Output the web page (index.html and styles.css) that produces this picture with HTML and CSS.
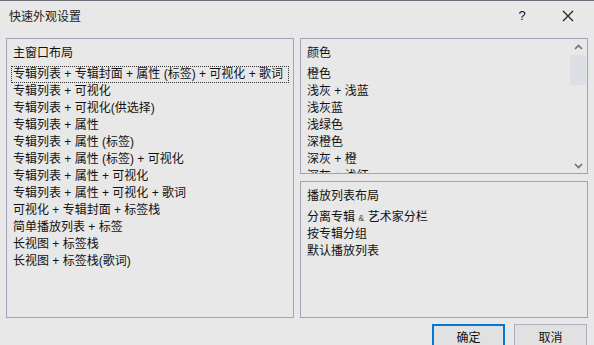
FILE: index.html
```html
<!DOCTYPE html>
<html lang="zh-CN">
<head>
  <meta charset="UTF-8">
  <title>快速外观设置</title>
  <link rel="stylesheet" href="styles.css">
</head>
<body>
  <div class="dialog">
    <div class="titlebar">
      <span class="title">快速外观设置</span>
      <span class="tb-btn help">?</span>
      <span class="tb-btn close">
        <svg width="12" height="12" viewBox="0 0 12 12"><path d="M1 1 L11 11 M11 1 L1 11" stroke="#1a1a1a" stroke-width="1.1" fill="none"/></svg>
      </span>
    </div>
    <div class="content">
      <div class="panel main-layout">
        <div class="heading">主窗口布局</div>
        <ul class="list">
          <li class="focused">专辑列表 + 专辑封面 + 属性 (标签) + 可视化 + 歌词</li>
          <li>专辑列表 + 可视化</li>
          <li>专辑列表 + 可视化(供选择)</li>
          <li>专辑列表 + 属性</li>
          <li>专辑列表 + 属性 (标签)</li>
          <li>专辑列表 + 属性 (标签) + 可视化</li>
          <li>专辑列表 + 属性 + 可视化</li>
          <li>专辑列表 + 属性 + 可视化 + 歌词</li>
          <li>可视化 + 专辑封面 + 标签栈</li>
          <li>简单播放列表 + 标签</li>
          <li>长视图 + 标签栈</li>
          <li>长视图 + 标签栈(歌词)</li>
        </ul>
      </div>
      <div class="side">
        <div class="panel colors">
          <div class="colors-body">
            <div class="heading">颜色</div>
            <ul class="list">
              <li>橙色</li>
              <li>浅灰 + 浅蓝</li>
              <li>浅灰蓝</li>
              <li>浅绿色</li>
              <li>深橙色</li>
              <li>深灰 + 橙</li>
              <li>深灰 + 浅红</li>
            </ul>
          </div>
          <div class="scrollbar">
            <svg class="arrow" width="9" height="6" viewBox="0 0 9 6"><path d="M1 5 L4.5 1.5 L8 5" stroke="#6e6e78" stroke-width="1.6" fill="none"/></svg>
            <div class="track"><div class="thumb"></div></div>
            <svg class="arrow" width="9" height="6" viewBox="0 0 9 6"><path d="M1 1 L4.5 4.5 L8 1" stroke="#6e6e78" stroke-width="1.6" fill="none"/></svg>
          </div>
        </div>
        <div class="panel playlist">
          <div class="heading">播放列表布局</div>
          <ul class="list">
            <li>分离专辑 <span class="amp">&amp;</span> 艺术家分栏</li>
            <li>按专辑分组</li>
            <li>默认播放列表</li>
          </ul>
        </div>
      </div>
    </div>
    <div class="buttons">
      <button class="btn primary">确定</button>
      <button class="btn">取消</button>
    </div>
  </div>
</body>
</html>
```

FILE: styles.css
```css
body {
  margin: 0;
  background: #e8e8e8;
  font-family: "Liberation Sans", "Noto Sans CJK SC", sans-serif;
  font-size: 12px;
  color: #111;
  overflow: hidden;
}
.dialog {
  height: 345px;
  border-top: 1px solid #6f6f7c;
  box-sizing: border-box;
}
.titlebar {
  height: 29px;
  display: flex;
  align-items: center;
  padding-left: 9px;
}
.title {
  flex: 1;
  color: #222;
}
.tb-btn {
  display: flex;
  align-items: center;
  justify-content: center;
  width: 44px;
  height: 29px;
}
.help {
  font-size: 13px;
  margin-right: 2px;
}
.close {
  margin-right: 4px;
}
.content {
  display: flex;
  gap: 6px;
  padding: 8px 6px 0 6px;
  height: 280px;
}
.panel {
  border: 1px solid #a3a3b5;
  box-sizing: border-box;
  padding: 6px 6px 0 6px;
  overflow: hidden;
}
.main-layout {
  width: 288px;
}
.side {
  width: 288px;
  display: flex;
  flex-direction: column;
  gap: 7px;
}
.colors {
  height: 136px;
  display: flex;
  padding-right: 1px;
}
.colors-body {
  flex: 1;
  overflow: hidden;
}
.playlist {
  flex: 1;
}
.heading {
  line-height: 17px;
  margin-bottom: 4px;
}
.list {
  list-style: none;
  margin: 0;
  padding: 0;
}
.list li {
  line-height: 17px;
  height: 17px;
  white-space: nowrap;
}
.list li.focused {
  outline: 1px dotted #333;
  outline-offset: -1px;
  margin-left: -2px;
  padding-left: 2px;
  width: 276px;
}
.amp {
  font-size: 9px;
  color: #555;
}
.scrollbar {
  width: 16px;
  display: flex;
  flex-direction: column;
  align-items: center;
  padding: 3px 0 4px 0;
  margin-top: -4px;
}
.arrow {
  flex: none;
}
.track {
  flex: 1;
  width: 16px;
  padding-top: 5px;
}
.thumb {
  height: 30px;
  background: #dcdfe5;
}
.buttons {
  display: flex;
  justify-content: flex-end;
  gap: 9px;
  padding: 6px 7px 0 0;
}
.btn {
  width: 73px;
  height: 24px;
  font-family: "Liberation Sans", "Noto Sans CJK SC", sans-serif;
  font-size: 12px;
  background: #e1e1e1;
  border: 1px solid #adadc0;
  color: #111;
  padding: 0;
}
.btn.primary {
  border: 2px solid #0078d7;
}
```
